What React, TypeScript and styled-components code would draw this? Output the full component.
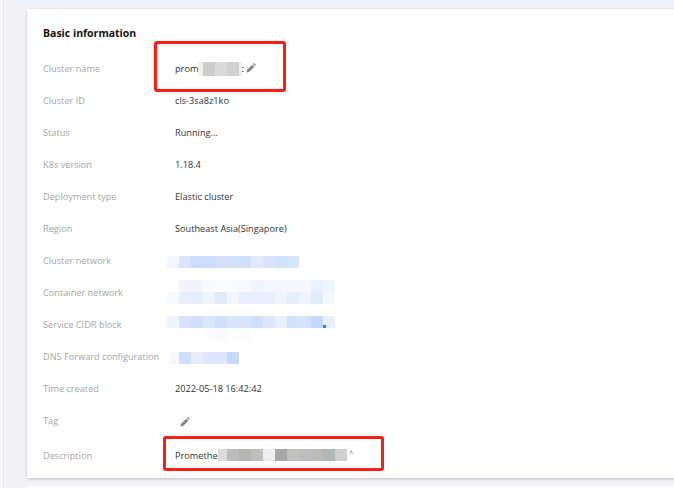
import React from "react";
import styled, { createGlobalStyle } from "styled-components";

const Global = createGlobalStyle`
  html, body { margin: 0; padding: 0; width: 674px; height: 488px; overflow: hidden; background: #f2f3f8; }
  body { font-family: "Open Sans", "Noto Sans", Arial, sans-serif; }
`;

const Page = styled.div`
  position: relative;
  width: 671px;
  height: 488px;
  box-sizing: border-box;
  overflow: hidden;
  padding: 9px 0 0 23px;
  margin-left: 3px;
  background: #f2f3f8;
  border-left: 1px solid #e2e3e8;
  display: flex;
  flex-direction: column;
  gap: 8px;
`;

const LeftEdge = styled.div`
  position: absolute;
  left: 0;
  top: 0;
  width: 3px;
  height: 488px;
  background: #fafafb;
`;

const Card = styled.section`
  background: #fff;
  width: 660px;
  height: 469px;
  flex: none;
  box-sizing: border-box;
  padding: 16px 0 0 16px;
  box-shadow: 0 1px 3px rgba(90, 100, 120, 0.35);
`;

const NextCard = styled.div`
  background: #fff;
  height: 20px;
  flex: none;
`;

const Title = styled.h2`
  margin: 0 0 11px;
  font-size: 10.5px;
  line-height: 16px;
  font-weight: 700;
  color: #111;
`;

const Rows = styled.div`
  display: flex;
  flex-direction: column;
`;

const Row = styled.div<{ $last?: boolean }>`
  display: grid;
  grid-template-columns: 132px 1fr;
  align-items: center;
  height: 32px;
  margin-top: ${(p) => (p.$last ? "3px" : "0")};
  font-size: 9.2px;
`;

const Label = styled.div`
  color: #a6a6a6;
  white-space: nowrap;
`;

const Value = styled.div`
  position: relative;
  display: flex;
  align-items: center;
  color: #333;
  white-space: nowrap;
  height: 100%;
`;

const Mosaic = styled.div<{ $left: number; $top: number; $cols: number; $h?: number }>`
  position: absolute;
  left: ${(p) => p.$left}px;
  top: ${(p) => p.$top}px;
  display: grid;
  grid-template-columns: repeat(${(p) => p.$cols}, 12px);
  grid-auto-rows: ${(p) => p.$h ?? 12}px;
`;

const Cell = styled.span<{ $c: string }>`
  background: ${(p) => p.$c};
`;

const Blue = styled.span`
  position: absolute;
  left: 156px;
  top: 9px;
  width: 3px;
  height: 3px;
  background: #3a7df0;
`;

const PencilButton = styled.button<{ $left: number; $top?: number }>`
  display: flex;
  padding: 0;
  border: 0;
  background: none;
  margin-left: ${(p) => p.$left}px;
  margin-top: ${(p) => p.$top ?? 0}px;
  color: #858585;
`;

const Gap = styled.span<{ $w: number }>`
  display: inline-block;
  width: ${(p) => p.$w}px;
`;

const Mark = styled.span`
  position: absolute;
  left: 174px;
  top: 11px;
  font-size: 7px;
  line-height: 8px;
  color: #666;
`;

const RedBox = styled.div<{ $x: number; $y: number; $w: number; $h: number }>`
  position: absolute;
  left: ${(p) => p.$x}px;
  top: ${(p) => p.$y}px;
  width: ${(p) => p.$w}px;
  height: ${(p) => p.$h}px;
  box-sizing: border-box;
  border: 3px solid #fb1d13;
  border-radius: 3px;
`;

const Pencil = () => (
  <svg width="10" height="10" viewBox="0 0 11 11" fill="currentColor">
    <path d="M0.5 10.5 L1 7.6 L6.8 1.8 L9.2 4.2 L3.4 10 Z" />
    <path d="M7.6 1 L8.4 0.4 Q8.8 0.1 9.2 0.4 L10.6 1.8 Q10.9 2.2 10.6 2.6 L10 3.4 Z" />
  </svg>
);

const cells = (list: string[]) => list.map((c, i) => <Cell key={i} $c={c} />);

const network = ["#f3f6fe","#dbe6fe","#cbdcfe","#cfdcfb","#d8def9","#d2e0fc","#cfe0fc","#e2e8fd","#dbe2fb","#cfe2fe","#d4e6fe"];
const containerTop = ["#ffffff","#f4f5fc","#f1f5fd","#f8f9fe","#fafbfe","#fafbff","#f8f9fe","#f1f5fd","#f3f6fd","#f3f6fe","#f3f6fe","#f3f6fe","#e8f1fd","#eef5fe"];
const containerBottom = ["#f6f9fe","#e8eefd","#e4eefd","#eef3fe","#e1e9fd","#f2f5fe","#e9eefd","#e9effd","#e9eefc","#f0f4fe","#e6eefd","#eef3fe","#e1ecfd","#f3f8fe"];
const cidr = ["#eff4fe","#dbe3fb","#cfdffd","#dbe7fd","#cfdffc","#dae4fd","#d9e3fc","#cddffd","#dfe6fc","#e9effc","#d2e2fd","#d4e3fd","#c3d9fe","#e6f0fe"];
const cidrFaint = ["#fff","#fff","#fff","#fdfdfe","#f9fafe","#fcfdff","#fbfcfe","#fff","#fff","#fff","#fff","#fff","#fff","#fff"];
const dns = ["linear-gradient(90deg,#fff 25%,#f5f8fe 25%)","#cfe0fd","#e8edfd","#dde6fd","#dde6fd","#c3d9fe"];
const nameBlur = ["linear-gradient(90deg,transparent 58%,#f0f0f0 58%)","#cdcdcd","#dadada","#d0d0d0","linear-gradient(90deg,#f0f0f0 25%,transparent 25%)"];
const descBlur = ["linear-gradient(90deg,transparent 25%,#dcdcdb 25%)","#bdbdbb","#b4b4b2","#bfbfbc","#eeeff0","#a6a7a7","#c2c2bf","#bdbdc0","#bdb9b5","#b1b7b6","#d0d0d0"];

export default function App() {
  return (
    <>
      <Global />
      <LeftEdge />
      <Page>
        <Card>
          <Title>Basic information</Title>
          <Rows>
            <Row>
              <Label>Cluster name</Label>
              <Value>
                prom-
                <Gap $w={38} />
                c
                <PencilButton $left={2}><Pencil /></PencilButton>
                <Mosaic $left={16} $top={10} $cols={5} $h={14}>{cells(nameBlur)}</Mosaic>
              </Value>
            </Row>
            <Row><Label>Cluster ID</Label><Value>cls-3sa8z1ko</Value></Row>
            <Row><Label>Status</Label><Value>Running...</Value></Row>
            <Row><Label>K8s version</Label><Value>1.18.4</Value></Row>
            <Row><Label>Deployment type</Label><Value>Elastic cluster</Value></Row>
            <Row><Label>Region</Label><Value>Southeast Asia(Singapore)</Value></Row>
            <Row>
              <Label>Cluster network</Label>
              <Value><Mosaic $left={-8} $top={12} $cols={11}>{cells(network)}</Mosaic></Value>
            </Row>
            <Row>
              <Label>Container network</Label>
              <Value>
                <Mosaic $left={-8} $top={4} $cols={14}>
                  {cells(containerTop)}
                  {cells(containerBottom)}
                </Mosaic>
              </Value>
            </Row>
            <Row>
              <Label>Service CIDR block</Label>
              <Value>
                <Mosaic $left={-8} $top={8} $cols={14}>
                  {cells(cidr)}
                  {cells(cidrFaint)}
                  <Blue />
                </Mosaic>
              </Value>
            </Row>
            <Row>
              <Label>DNS Forward configuration</Label>
              <Value><Mosaic $left={-8} $top={12} $cols={6}>{cells(dns)}</Mosaic></Value>
            </Row>
            <Row><Label>Time created</Label><Value>2022-05-18 16:42:42</Value></Row>
            <Row>
              <Label>Tag</Label>
              <Value><PencilButton $left={5} $top={4}><Pencil /></PencilButton></Value>
            </Row>
            <Row $last>
              <Label>Description</Label>
              <Value>
                Promethe
                <Mosaic $left={40} $top={10} $cols={11}>{cells(descBlur)}</Mosaic>
                <Mark>^</Mark>
              </Value>
            </Row>
          </Rows>
        </Card>
        <NextCard />
      </Page>
      <RedBox $x={154} $y={41} $w={132} $h={51} />
      <RedBox $x={163} $y={436} $w={221} $h={35} />
    </>
  );
}
